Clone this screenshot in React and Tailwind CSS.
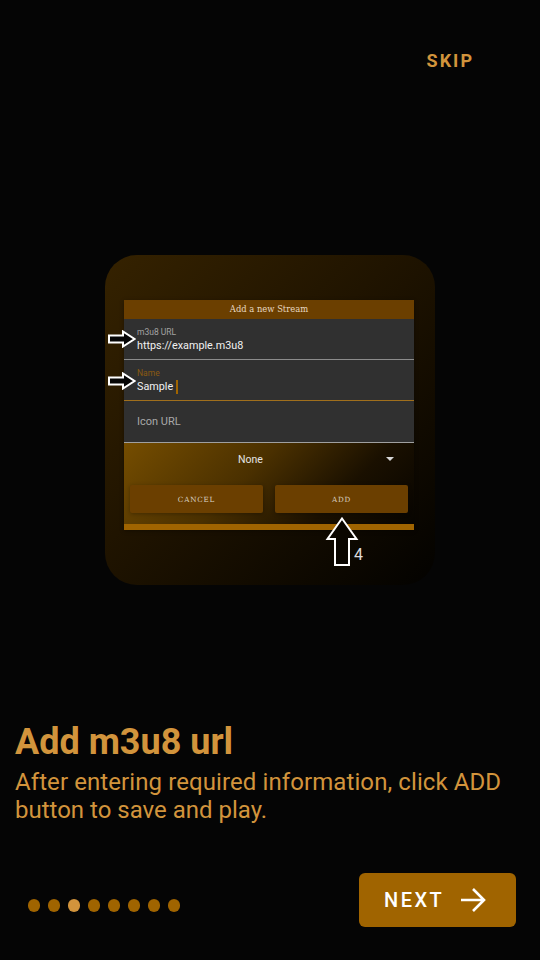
import React from "react";

const roboto = { fontFamily: "Roboto, 'Liberation Sans', sans-serif" };
const serif = { fontFamily: "'DejaVu Serif', 'Liberation Serif', serif" };

function ArrowRightOutline({ className }) {
  return (
    <svg className={className} width="28" height="18" viewBox="0 0 28 18" fill="none">
      <path d="M1 5.5H15V1.5L26.5 9L15 16.5V12.5H1Z" stroke="#fff" strokeWidth="2" fill="#050505" />
    </svg>
  );
}

function Field({ label, value, labelClass, line, caret }) {
  return (
    <div className={`h-[41px] px-[13px] pt-[8px] flex flex-col border-b ${line} bg-[#303030]`}>
      <div className={`text-[8.5px] leading-[10px] ${labelClass}`}>{label}</div>
      <div className="text-[10.8px] leading-[15px] mt-[1px] text-[#f0f0f0] flex items-center">
        {value}
        {caret && <span className="ml-[3px] inline-block w-[2px] h-[14px] bg-[#a06400]" />}
      </div>
    </div>
  );
}

export default function App() {
  return (
    <div className="w-[540px] h-[960px] bg-[#050505] flex flex-col overflow-hidden" style={roboto}>
      <div className="h-[255px] flex justify-end pr-[66px] pt-[50px]">
        <span className="text-[18px] leading-[22px] font-bold tracking-[2px] text-[#d2943c]">SKIP</span>
      </div>

      <div className="flex justify-center">
        <div className="relative w-[330px] h-[330px] rounded-[32px] bg-[linear-gradient(135deg,#352200_0%,#1d1200_50%,#030200_100%)] pt-[45px] pl-[19px]">
          <div className="relative w-[290px] h-[230px] flex flex-col shadow-[0_1px_4px_rgba(0,0,0,0.35)]">
            <div
              className="h-[19px] bg-[#6b3f00] flex items-center justify-center text-[#e8d9c0] text-[8.4px]"
              style={serif}
            >
              Add a new Stream
            </div>
            <Field label="m3u8 URL" value="https://example.m3u8" labelClass="text-[#a3a3a3]" line="border-[#8c8c8c]" />
            <Field label="Name" value="Sample" labelClass="text-[#8a5a10]" line="border-[#a06f1c]" caret />
            <div className="h-[42px] px-[13px] pt-[2px] flex items-center bg-[#303030] border-b border-[#a0a0a0] text-[11px] text-[#a8a8a8]">
              Icon URL
            </div>
            <div className="flex-1 flex flex-col bg-[linear-gradient(135deg,#754d00_0px,#4a3000_110px,#1a1000_190px,#000000_290px)]">
              <div className="h-[32px] pt-[2px] relative flex items-center pl-[114px] text-[10.5px] text-[#e4e4e4]">
                None
                <span className="absolute right-[20px] top-[14px] w-0 h-0 border-l-[4px] border-r-[4px] border-t-[4px] border-l-transparent border-r-transparent border-t-[#d8d8d8]" />
              </div>
              <div className="flex justify-between px-[6px] mt-[10px]">
                <button
                  className="w-[133px] h-[28px] pt-[2px] rounded-[2px] bg-[#6b3f00] text-[#d8d0c0] text-[7.2px] tracking-[0.8px] shadow-[0_1px_4px_rgba(0,0,0,0.3)]"
                  style={serif}
                >
                  CANCEL
                </button>
                <button
                  className="w-[133px] h-[28px] pt-[2px] rounded-[2px] bg-[#6b3f00] text-[#d8d0c0] text-[7.2px] tracking-[0.8px] shadow-[0_1px_4px_rgba(0,0,0,0.3)]"
                  style={serif}
                >
                  ADD
                </button>
              </div>
            </div>
            <div className="h-[6px] bg-[#a06400]" />
          </div>

          <ArrowRightOutline className="absolute left-[3px] top-[75px]" />
          <ArrowRightOutline className="absolute left-[3px] top-[117px]" />
          <svg className="absolute left-[220px] top-[262px]" width="34" height="50" viewBox="0 0 34 50" fill="none">
            <path d="M17 1.5L31.5 22H24V48H10V22H2.5Z" stroke="#fff" strokeWidth="2" fill="#0a0600" />
          </svg>
          <span className="absolute left-[249px] top-[291px] text-[16px] leading-[18px] text-[#dcdcdc]">4</span>
        </div>
      </div>

      <div className="mt-[135px] px-[15px]">
        <h1 className="text-[36px] leading-[44px] font-bold text-[#d2943c]">Add m3u8 url</h1>
        <p className="text-[24px] leading-[28px] text-[#d2943c] mt-[4px]">
          <span className="block tracking-[0.09px] whitespace-nowrap">After entering required information, click ADD</span>
          <span className="block">button to save and play.</span>
        </p>
      </div>

      <div className="mt-[49px] flex items-center justify-between pl-[28px] pr-[24px]">
        <div className="flex gap-[8px] mt-[11px]">
          {[0, 1, 2, 3, 4, 5, 6, 7].map((i) => (
            <span key={i} className={`w-[12px] h-[13px] rounded-full ${i === 2 ? "bg-[#d2943c]" : "bg-[#a06400]"}`} />
          ))}
        </div>
        <button className="w-[157px] h-[54px] rounded-[6px] bg-[#a06400] flex items-center pl-[25px] text-white text-[20px] font-medium tracking-[2.5px]">
          NEXT
          <svg className="ml-[16px]" width="26" height="26" viewBox="0 0 26 26" fill="none" stroke="#fff" strokeWidth="2.6">
            <path d="M1 13H24M13 2L24 13L13 24" />
          </svg>
        </button>
      </div>
    </div>
  );
}
